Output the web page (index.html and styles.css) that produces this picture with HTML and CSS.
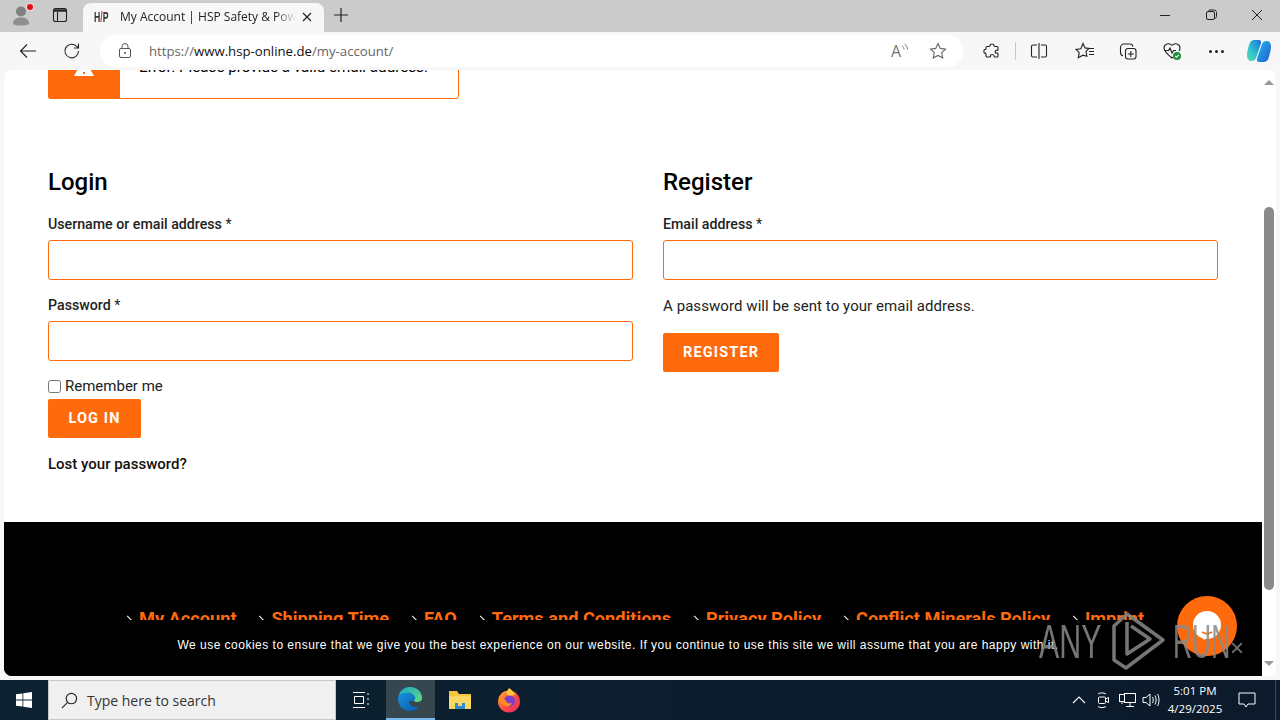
FILE: index.html
```html
<!DOCTYPE html>
<html lang="en">

<head>
    <meta charset="UTF-8">
    <title>My Account | HSP Safety &amp; Power</title>
    <link rel="stylesheet" href="styles.css">
</head>

<body>
    <div class="tabstrip">
        <div class="strip-btn profile">
            <svg width="24" height="24" viewBox="0 0 24 24"><circle cx="11" cy="8.500" r="5" fill="#808080"/><path d="M3 21c0-5 3.500-6.500 8-6.500s8 1.500 8 6.500c-3 2-13 2-16 0z" fill="#8f8f8f"/></svg>
            <span class="red-dot"></span>
        </div>
        <div class="strip-btn tabs-btn">
            <svg width="16" height="16" viewBox="0 0 16 16" fill="none" stroke="#222" stroke-width="1.100"><rect x="1.500" y="1.500" width="13" height="13" rx="2"/><path d="M5.500 5v9.500"/><path d="M2 3.500h12" stroke-width="2.400"/></svg>
        </div>
        <div class="tab">
            <span class="favicon">H<i>/</i>P</span>
            <span class="tab-title">My Account | HSP Safety &amp; Power</span>
            <svg class="tab-close" width="10" height="10" viewBox="0 0 10 10" stroke="#222" stroke-width="1.200"><path d="M1 1l8 8M9 1L1 9"/></svg>
        </div>
        <svg class="new-tab" width="14" height="14" viewBox="0 0 14 14" stroke="#222" stroke-width="1.200"><path d="M7 0v14M0 7h14"/></svg>
        <div class="window-btns">
            <svg width="46" height="12" viewBox="0 0 46 12" stroke="#222" fill="none"><path d="M18 6.500h10"/></svg>
            <svg width="46" height="12" viewBox="0 0 46 12" stroke="#222" fill="none"><rect x="18.500" y="2.500" width="8" height="8" rx="1.500"/><path d="M20.500 2.500c0-1 .5-1.500 1.500-1.500h4c1.500 0 2.500 1 2.500 2.500v4c0 1-.5 1.500-1.500 1.500"/></svg>
            <svg width="46" height="12" viewBox="0 0 46 12" stroke="#222" fill="none"><path d="M18 1l10 10M28 1L18 11"/></svg>
        </div>
    </div>

    <div class="toolbar">
        <svg class="nav-icon" width="18" height="16" viewBox="0 0 18 16" fill="none" stroke="#222" stroke-width="1.100"><path d="M17 8H1.500M8 1.500L1.500 8 8 14.500"/></svg>
        <svg class="nav-icon" width="18" height="18" viewBox="0 0 18 18" fill="none" stroke="#222" stroke-width="1.100"><path d="M15.500 9a6.800 6.800 0 1 1-2-4.800L15.500 6"/><path d="M15.500 1.500V6H11"/></svg>
        <div class="address">
            <svg class="lock" width="14" height="16" viewBox="0 0 14 16" fill="none" stroke="#555"><rect x="1.500" y="5.500" width="11" height="9" rx="1.500"/><path d="M4 5.500V3.500a3 3 0 0 1 6 0v2"/><circle cx="7" cy="10" r="1" fill="#555" stroke="none"/></svg>
            <span class="url">https://<b>www.hsp-online.de</b>/my-account/</span>
            <span class="read-aloud">A<svg width="7" height="10" viewBox="0 0 7 10" fill="none" stroke="#777"><path d="M1 3c1.500.8 2 2 2 3.500M3.500 1C5.500 2.500 6.500 4 6.500 6.500"/></svg></span>
            <svg class="star" width="18" height="18" viewBox="0 0 18 18" fill="none" stroke="#666" stroke-width="1.100"><path d="M9 1.500l2.300 4.900 5.200.7-3.800 3.600 1 5.300L9 13.400l-4.700 2.600 1-5.300L1.500 7.100l5.200-.7z"/></svg>
        </div>
        <div class="tool-icons">
            <svg class="tool" width="44" height="18" viewBox="0 0 18 18" fill="none" stroke="#222" stroke-width="1.100"><path d="M7 3.500C7 1.500 11 1.500 11 3.500c0 .8 0 1 1 1h2c.8 0 1 .5 1 1v2c0 .8-.5 1-1 .8-2-.8-3 3.400 0 2.700.6-.2 1 .2 1 1v2c0 .6-.4 1-1 1h-2c-1 0-1-.5-1-1 .3-2-4-2-3.500 0 .1.600-.2 1-1 1H4c-.6 0-1-.4-1-1v-2c0-.8-.5-1-1-.8C.5 11.500.5 7 2.200 7.500c.4.100.8-.2.800-1v-1c0-.6.400-1 1-1h2c.6 0 1-.2 1-1z"/></svg>
            <span class="tool-sep"></span>
            <svg class="tool split" width="44" height="18" viewBox="0 0 18 18" fill="none" stroke="#222" stroke-width="1.100"><path d="M7 3H3a1.500 1.500 0 0 0-1.500 1.500v9A1.500 1.500 0 0 0 3 15h4M11 3h4a1.500 1.500 0 0 1 1.500 1.500v9A1.500 1.500 0 0 1 15 15h-4M9 1v16"/></svg>
            <svg class="tool favs" width="44" height="18" viewBox="0 0 20 18" fill="none" stroke="#222" stroke-width="1.100"><path d="M8 1.500l2 4.400 4 .5-3 3 .9 4.800L8 13.200l-4.700 2.500.9-5-3.200-3.300 4.900-.6z"/><path d="M14 6.500h5M14 9.500h5M14 12.500h5"/></svg>
            <svg class="tool" width="44" height="18" viewBox="0 0 18 18" fill="none" stroke="#222" stroke-width="1.100"><rect x="6.500" y="6.500" width="10.500" height="10.500" rx="2.500"/><path d="M11.800 9v6M8.800 12h6"/><path d="M14 4.500C13.500 2.500 12.500 2 11 2H5a3.500 3.500 0 0 0-3.500 3.500v5c0 2 1 3 2.500 3.300"/></svg>
            <svg class="tool" width="44" height="20" viewBox="0 0 20 20" fill="none" stroke="#222" stroke-width="1.100"><path d="M10 4.500C7.500 1.500 2 2.500 2 7c0 3 3 6 8 10 1-.8 2-1.600 2.800-2.300M10 4.500c2.500-3 8-2 8 2.500 0 1-.3 2-1 3"/><path d="M3 9.500h3.500l1.500-2.500 2 5 1.500-2.500H14"/><circle cx="15" cy="15" r="4" fill="#1f8f3f" stroke="none"/><path d="M13.200 15l1.300 1.300 2.300-2.500" stroke="#fff"/></svg>
            <span class="more"><i></i><i></i><i></i></span>
            <svg class="copilot" width="26" height="26" viewBox="0 0 26 26">
                <defs>
                    <linearGradient id="cop-a" x1="0" y1="0" x2="1" y2="1"><stop offset="0" stop-color="#2ab6e8"/><stop offset="1" stop-color="#1c5fd6"/></linearGradient>
                    <linearGradient id="cop-b" x1="1" y1="0" x2="0" y2="1"><stop offset="0" stop-color="#1c6ee0"/><stop offset=".6" stop-color="#30c4cf"/><stop offset="1" stop-color="#5fd8a8"/></linearGradient>
                </defs>
                <path d="M8 2h5c2 0 2.500 2 1.800 4L10 20c-.8 2-2 3-4.500 3C2.500 23 1 21 1 17.500c0-4 2-11 3-13C5 3 6.500 2 8 2z" fill="url(#cop-b)"/>
                <path d="M18 24h-5c-2 0-2.500-2-1.800-4L16 6c.8-2 2-3 4.500-3 3 0 4.500 2 4.500 5.500 0 4-2 11-3 13-1 1.500-2.500 2.500-4 2.500z" fill="url(#cop-a)"/>
            </svg>
        </div>
    </div>

    <div class="viewport">
        <div class="page">
            <div class="content">
                <div class="notice">
                    <div class="notice-icon">
                        <svg width="22" height="20" viewBox="0 0 22 20"><path d="M11 1l10 18H1z" fill="#fff"/><path d="M11 7v6M11 15v2" stroke="#ff6a0d" stroke-width="2"/></svg>
                    </div>
                    <p>Error: Please provide a valid email address.</p>
                </div>

                <div class="columns">
                    <form class="login-col">
                        <h2>Login</h2>
                        <label class="field-label">Username or email address <span>*</span></label>
                        <input class="field" type="text">
                        <label class="field-label">Password <span>*</span></label>
                        <input class="field" type="text">
                        <label class="remember"><input type="checkbox"> Remember me</label>
                        <button type="button" class="btn">Log in</button>
                        <a class="lost" href="#">Lost your password?</a>
                    </form>
                    <form class="register-col">
                        <h2>Register</h2>
                        <label class="field-label">Email address <span>*</span></label>
                        <input class="field" type="text">
                        <p class="hint">A password will be sent to your email address.</p>
                        <button type="button" class="btn">Register</button>
                    </form>
                </div>
            </div>

            <footer>
                <ul class="footer-nav">
                    <li><a href="#">My Account</a></li>
                    <li><a href="#">Shipping Time</a></li>
                    <li><a href="#">FAQ</a></li>
                    <li><a href="#">Terms and Conditions</a></li>
                    <li><a href="#">Privacy Policy</a></li>
                    <li><a href="#">Conflict Minerals Policy</a></li>
                    <li><a href="#">Imprint</a></li>
                </ul>
            </footer>

            <div class="cookie-bar">We use cookies to ensure that we give you the best experience on our website. If you continue to use this site we will assume that you are happy with it.</div>
            <div class="chat-bubble">
                <svg width="30" height="30" viewBox="0 0 30 30"><circle cx="15" cy="14" r="14" fill="#fff"/><path d="M9 25l3 4 4-3z" fill="#fff"/><path d="M10 21c3 2 7 2 10 0" stroke="#ff6a0d" stroke-width="1.600" fill="none"/></svg>
            </div>
        </div>
        <div class="scrollbar">
            <span class="arrow-up"></span>
            <div class="track"><div class="thumb"></div></div>
            <span class="arrow-down"></span>
        </div>
    </div>

    <div class="watermark">
        <span class="wm-any">ANY</span>
        <svg width="56" height="62" viewBox="0 0 56 62" fill="none" stroke="#8a8a8a" stroke-width="3.500" stroke-linejoin="round"><path d="M4 50V16L17 4l36 26-37 28-12-8z"/><path d="M17 12v32l23-15-19-13"/></svg>
        <span class="wm-run">RUN</span>
        <em>×</em>
    </div>

    <div class="taskbar">
        <div class="start">
            <svg width="16" height="16" viewBox="0 0 16 16" fill="#fff"><path d="M0 2.300l6.500-.9v6.200H0zM7.300 1.300L16 0v7.600H7.300zM0 8.400h6.500v6.200L0 13.700zM7.300 8.400H16V16l-8.700-1.200z"/></svg>
        </div>
        <div class="search">
            <svg width="17" height="17" viewBox="0 0 18 18" fill="none" stroke="#222" stroke-width="1.200"><circle cx="11" cy="7" r="5.500"/><path d="M7 11l-6 6"/></svg>
            <span>Type here to search</span>
        </div>
        <div class="task-item">
            <svg width="18" height="16" viewBox="0 0 18 16" fill="none" stroke="#fff"><path d="M1 .5h12M1 15.500h12M2.500 4.500h9v7h-9zM16 1v2M16 6v2M16 11v2"/></svg>
        </div>
        <div class="task-item active">
            <svg width="26" height="26" viewBox="0 0 26 26">
                <defs>
                    <linearGradient id="edge-a" x1="0" y1="0" x2="1" y2="1"><stop offset="0" stop-color="#1fa8c8"/><stop offset="1" stop-color="#62dc78"/></linearGradient>
                    <linearGradient id="edge-b" x1="0" y1="0" x2="1" y2="1"><stop offset="0" stop-color="#1a9be0"/><stop offset="1" stop-color="#0a55b0"/></linearGradient>
                </defs>
                <path d="M1 13C1 6 6.500 1 13 1c7 0 12 5 12 11 0 1-.2 2-.5 3H12c0 3 2.500 6 7 6 1 0 2-.2 3-.6C20 23.500 16.500 25 13 25 6.500 25 1 20 1 13z" fill="url(#edge-b)"/>
                <path d="M2 9c2-5 6-8 11-8 7 0 12 5 12 11 0 2.500-2 4-5 4-2 0-3-.6-3-1.500 1-1 1.500-2 1-3.500-1-3-4-4.500-7-4.500S4 7.500 2 9z" fill="url(#edge-a)"/>
            </svg>
        </div>
        <div class="task-item">
            <svg width="24" height="22" viewBox="0 0 24 22"><path d="M1 2h8l2 3h12v15H1z" fill="#f5c542"/><rect x="1" y="7" width="22" height="13" fill="#fbd75f"/><rect x="7" y="14" width="10" height="6" fill="#2f8bd6"/><rect x="10" y="14" width="4" height="3" fill="#fbd75f"/></svg>
        </div>
        <div class="task-item">
            <svg width="26" height="26" viewBox="0 0 26 26">
                <defs>
                    <linearGradient id="fox-a" x1="0" y1="0" x2="1" y2="1"><stop offset="0" stop-color="#ffb52e"/><stop offset=".5" stop-color="#ff4f3e"/><stop offset="1" stop-color="#e3256b"/></linearGradient>
                </defs>
                <circle cx="13" cy="14.500" r="11" fill="url(#fox-a)"/>
                <path d="M13 1c3 2 5 4 6 7l-6 1-3-3c1-2 2-3 3-5z" fill="#ffc93a"/>
                <circle cx="13.500" cy="14" r="5.500" fill="#7b3fd0"/>
                <path d="M4 11c3 0 5 1 6 3s3 3 6 2c-1 3-4 4-7 3-3-1-5-4-5-8z" fill="#ff8a26"/>
            </svg>
        </div>
        <div class="tray">
            <svg width="24" height="10" viewBox="0 0 24 10" fill="none" stroke="#fff" stroke-width="1.100"><path d="M6 8l6-6 6 6"/></svg>
            <svg width="24" height="18" viewBox="0 0 24 18" fill="none" stroke="#fff"><rect x="7.500" y="6" width="7" height="6.500" rx="1"/><path d="M14.500 8l3-1.500v5l-3-1.500M7 3c1.500-1.500 6-1.500 8 0M7 15.500c1.500 1.500 6 1.500 8 0"/></svg>
            <svg width="24" height="16" viewBox="0 0 24 16" fill="none" stroke="#fff"><rect x="9.500" y="1.500" width="11" height="9"/><rect x="4.500" y="2.500" width="5" height="7"/><path d="M15 10.500V14M11 14.500h8M7 9.500V12"/></svg>
            <svg width="24" height="16" viewBox="0 0 24 16" fill="none" stroke="#fff"><path d="M4 5.500h3L11 2v12l-4-3.500H4z"/><path d="M13.500 5c1 1.800 1 4.200 0 6M16 3.500c1.500 3 1.500 6 0 9M18.500 2c2 3.500 2 8.500 0 12"/></svg>
            <div class="clock"><span>5:01 PM</span><span>4/29/2025</span></div>
            <svg class="notif" width="18" height="16" viewBox="0 0 18 16" fill="none" stroke="#fff"><path d="M1 1h16v11h-7l-2 3-2-3H1z"/></svg>
            <span class="show-desktop"></span>
        </div>
    </div>
</body>

</html>
```

FILE: styles.css
```css
* {
    box-sizing: border-box;
}

body {
    margin: 0;
    width: 1280px;
    height: 720px;
    overflow: hidden;
    position: relative;
    display: flex;
    flex-direction: column;
    font-family: 'Roboto', sans-serif;
    color: #000;
    background: #f7f7f7;
}

/* browser chrome */
.tabstrip {
    height: 32px;
    flex: none;
    display: flex;
    align-items: center;
    padding-bottom: 2px;
    background: #cbcbcb;
}

.strip-btn {
    position: relative;
    display: flex;
    align-items: center;
    justify-content: center;
}

.profile {
    width: 44px;
    height: 30px;
}

.red-dot {
    position: absolute;
    top: 4px;
    left: 27px;
    width: 6px;
    height: 6px;
    border-radius: 50%;
    background: #e0101a;
    box-shadow: 0 0 0 1px #e8dcdc;
}

.tabs-btn {
    width: 32px;
    height: 30px;
}

.tab {
    width: 241px;
    height: 30px;
    margin: 4px 0 -2px 7px;
    padding: 0 11px 3px 11px;
    display: flex;
    align-items: center;
    background: #f7f7f7;
    border-radius: 8px 8px 0 0;
}

.favicon {
    width: 26px;
    flex: none;
    font-family: 'Liberation Sans', sans-serif;
    font-size: 14px;
    font-weight: bold;
    color: #333;
    transform: scaleX(0.62);
    transform-origin: left;
    white-space: nowrap;
}

.favicon i {
    color: #d0392b;
    font-style: normal;
}

.tab-title {
    width: 176px;
    flex: none;
    overflow: hidden;
    white-space: nowrap;
    font-family: 'Open Sans', sans-serif;
    font-size: 12px;
    color: #222;
    -webkit-mask-image: linear-gradient(to right, #000 88%, transparent);
    mask-image: linear-gradient(to right, #000 88%, transparent);
}

.tab-close {
    flex: none;
    margin-left: 6px;
}

.new-tab {
    margin-left: 10px;
}

.window-btns {
    margin-left: auto;
    display: flex;
}

.toolbar {
    height: 38px;
    flex: none;
    display: flex;
    align-items: center;
    padding: 0 9px 0 19px;
    background: #f7f7f7;
}

.nav-icon {
    flex: none;
    margin-right: 26px;
}

.nav-icon + .nav-icon {
    margin-right: 19px;
}

.address {
    width: 863px;
    height: 32px;
    flex: none;
    display: flex;
    align-items: center;
    padding: 0 16px 0 18px;
    background: #fff;
    border-radius: 16px;
}

.lock {
    flex: none;
}

.url {
    margin-left: 17px;
    font-family: 'Open Sans', sans-serif;
    font-size: 13.200px;
    color: #666;
}

.url b {
    font-weight: 400;
    color: #111;
}

.read-aloud {
    margin-left: auto;
    display: flex;
    font-family: 'Open Sans', sans-serif;
    font-size: 16px;
    color: #777;
}

.read-aloud svg {
    margin-top: 3px;
}

.star {
    margin-left: 21px;
}

.tool-icons {
    flex: 1;
    display: flex;
    align-items: center;
    padding-left: 7px;
}

.tool {
    flex: none;
}

.tool-sep {
    width: 1px;
    height: 18px;
    margin: 0 1px;
    flex: none;
    background: #c8c8c8;
}

.split {
    margin-right: 2px;
}

.favs {
    margin-right: -1px;
}

.more {
    width: 44px;
    flex: none;
    display: flex;
    justify-content: center;
    gap: 3px;
}

.more i {
    width: 3px;
    height: 3px;
    border-radius: 50%;
    background: #222;
}

.copilot {
    flex: none;
    margin-left: 8px;
}

/* page */
.viewport {
    height: 606px;
    flex: none;
    display: flex;
    padding: 0 4px;
}

.page {
    position: relative;
    width: 1258px;
    height: 606px;
    overflow: hidden;
    background: #fff;
    border-radius: 8px 0 0 8px;
}

.content {
    display: flow-root;
    height: 452px;
    padding: 0 44px;
}

.notice {
    width: 411px;
    height: 65px;
    margin-top: -36px;
    display: flex;
    align-items: center;
    border: 1px solid #ff6a0d;
    border-radius: 3px;
}

.notice-icon {
    width: 72px;
    height: 65px;
    margin-left: -1px;
    flex: none;
    display: flex;
    align-items: center;
    justify-content: center;
    background: #ff6a0d;
    border-radius: 3px 0 0 3px;
}

.notice p {
    margin: 0 0 0 19px;
    font-size: 15.200px;
}

.columns {
    display: flex;
    gap: 30px;
    margin-top: 68px;
}

.login-col {
    width: 585px;
    flex: none;
}

.login-col .btn {
    width: 93px;
    padding: 0;
}

.register-col {
    width: 555px;
    flex: none;
}

.columns h2 {
    margin: 0 0 17px;
    height: 30px;
    font-size: 24px;
    line-height: 30px;
    font-weight: 500;
}

.field-label {
    display: block;
    height: 20px;
    margin-bottom: 6px;
    font-size: 14.200px;
    line-height: 20px;
    font-weight: 500;
    color: #222;
}

.field-label span {
    font-weight: 400;
}

.field {
    display: block;
    width: 100%;
    height: 40px;
    margin-bottom: 15px;
    background: #fff;
    border: 1px solid #ff6a0d;
    border-radius: 3px;
    outline: none;
}

.remember {
    display: flex;
    align-items: center;
    gap: 4px;
    height: 20px;
    font-size: 15px;
    color: #222;
}

.remember input {
    width: 13px;
    height: 13px;
    margin: 0;
}

.btn {
    display: block;
    height: 39px;
    margin-top: 3px;
    padding: 0 20px;
    border: none;
    border-radius: 2px;
    background: #ff6a0d;
    color: #fff;
    font-family: 'Roboto', sans-serif;
    font-size: 14.500px;
    font-weight: 700;
    letter-spacing: 1.150px;
    text-transform: uppercase;
}

.lost {
    display: block;
    margin-top: 16px;
    font-size: 15px;
    line-height: 20px;
    font-weight: 500;
    color: #111;
    text-decoration: none;
}

.hint {
    margin: 0 0 17px;
    height: 20px;
    font-size: 15px;
    line-height: 20px;
    letter-spacing: 0.070px;
    color: #222;
}

.register-col .field {
    margin-bottom: 16px;
}

.register-col .btn {
    margin-top: 0;
}

/* footer, cut off by the cookie bar */
footer {
    height: 154px;
    padding: 86px 0 0 123px;
    background: #000;
}

.footer-nav {
    margin: 0;
    padding: 0;
    list-style: none;
    display: flex;
    gap: 22.800px;
    font-size: 18.200px;
    font-weight: 700;
    line-height: 22px;
}

.footer-nav li {
    position: relative;
    padding-left: 12px;
    white-space: nowrap;
}

.footer-nav li::before {
    content: "";
    position: absolute;
    left: -3px;
    top: 9px;
    width: 6px;
    height: 6px;
    border-top: 1.500px solid #fff;
    border-right: 1.500px solid #fff;
    transform: rotate(45deg);
}

.footer-nav a {
    color: #ff6a0d;
    text-decoration: none;
}

.cookie-bar {
    position: absolute;
    left: 0;
    right: 0;
    bottom: 0;
    height: 56px;
    padding: 18px 30px 0 0;
    background: #000;
    color: #fff;
    font-family: 'Liberation Sans', sans-serif;
    font-size: 12px;
    line-height: 14px;
    letter-spacing: 0.490px;
    text-align: center;
    white-space: nowrap;
}

.chat-bubble {
    position: absolute;
    left: 1173px;
    top: 526px;
    width: 60px;
    height: 60px;
    display: flex;
    align-items: center;
    justify-content: center;
    background: #ff6a0d;
    border-radius: 50%;
}

.scrollbar {
    width: 14px;
    display: flex;
    flex-direction: column;
    align-items: center;
    background: #fff;
    border-radius: 0 8px 8px 0;
}

.arrow-up,
.arrow-down {
    width: 0;
    height: 0;
    flex: none;
    border-left: 5px solid transparent;
    border-right: 5px solid transparent;
}

.arrow-up {
    margin: 10px 0 5px;
    border-bottom: 5px solid #999;
}

.arrow-down {
    margin: 5px 0 10px;
    border-top: 5px solid #999;
}

.track {
    flex: 1;
    width: 10px;
}

.thumb {
    width: 10px;
    height: 383px;
    margin-top: 117px;
    border-radius: 5px;
    background: #8a8a8a;
}

/* anyrun watermark */
.watermark {
    position: absolute;
    left: 1039px;
    top: 610px;
    height: 62px;
    display: flex;
    align-items: center;
    color: #8a8a8a;
    opacity: 0.85;
    font-family: 'Liberation Sans', sans-serif;
    font-size: 49px;
}

.watermark span {
    display: inline-block;
    white-space: nowrap;
    transform-origin: left;
}

.wm-any {
    width: 61px;
    margin-right: 10px;
    transform: scaleX(0.62);
}

.wm-run {
    width: 57px;
    margin-left: 7px;
    transform: scaleX(0.54);
}

.watermark em {
    margin-top: 14px;
    font-style: normal;
    font-size: 24px;
    line-height: 24px;
}

/* windows taskbar */
.taskbar {
    position: absolute;
    left: 0;
    right: 0;
    bottom: 0;
    height: 40px;
    display: flex;
    align-items: center;
    background: linear-gradient(to right, #0b2230, #0c1a2b);
}

.start {
    width: 48px;
    height: 40px;
    display: flex;
    align-items: center;
    justify-content: center;
}

.search {
    width: 288px;
    height: 40px;
    display: flex;
    align-items: center;
    gap: 9px;
    padding-left: 12px;
    background: #f0f0f0;
    border: 1px solid #c8c8c8;
    font-family: 'Open Sans', sans-serif;
    font-size: 14px;
    color: #333;
}

.task-item {
    width: 49.500px;
    height: 40px;
    display: flex;
    align-items: center;
    justify-content: center;
}

.active {
    background: #37474f;
    border-bottom: 2px solid #76b9ed;
}

.tray {
    margin-left: auto;
    height: 40px;
    display: flex;
    align-items: center;
}

.clock {
    width: 52px;
    display: flex;
    flex-direction: column;
    align-items: center;
    margin-left: 6px;
    font-family: 'Open Sans', sans-serif;
    font-size: 11.500px;
    line-height: 18px;
    color: #fff;
    white-space: nowrap;
}

.notif {
    margin-left: 17px;
}

.show-desktop {
    width: 1px;
    height: 40px;
    margin: 0 4px 0 19px;
    background: #3a4a58;
}
```
